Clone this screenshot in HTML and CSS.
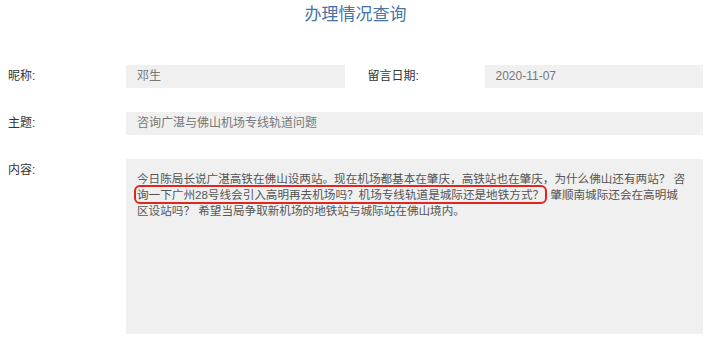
FILE: index.html
```html
<!DOCTYPE html>
<html>
<head>
    <meta charset="utf-8">
    <title>办理情况查询</title>
    <link rel="stylesheet" href="styles.css">
</head>
<body>
    <div class="query-page">
        <h2 class="page-title">办理情况查询</h2>
        <div class="detail-grid">
            <div class="field-label">昵称:</div>
            <div class="field-value">邓生</div>
            <div class="field-label field-label-inner">留言日期:</div>
            <div class="field-value">2020-11-07</div>

            <div class="field-label">主题:</div>
            <div class="field-value field-wide">咨询广湛与佛山机场专线轨道问题</div>

            <div class="field-label">内容:</div>
            <div class="field-value field-wide field-content">今日陈局长说广湛高铁在佛山设两站。现在机场都基本在肇庆，高铁站也在肇庆，为什么佛山还有两站？ 咨<span class="mark">询一下广州28号线会引入高明再去机场吗？机场专线轨道是城际还是地铁方式？</span> 肇顺南城际还会在高明城区设站吗？ 希望当局争取新机场的地铁站与城际站在佛山境内。</div>
        </div>
    </div>
</body>
</html>
```

FILE: styles.css
```css
body {
    margin: 0;
    background: #fff;
    font-family: "Liberation Sans", "Noto Sans CJK SC", sans-serif;
}
.query-page {
    padding: 0 14px 0 8px;
}
.page-title {
    margin: 0 0 35px;
    font-size: 17px;
    font-weight: normal;
    line-height: 30px;
    text-align: center;
    color: #4673a5;
}
.detail-grid {
    display: grid;
    grid-template-columns: 118px 1fr 140px 1fr;
    row-gap: 24px;
}
.field-label {
    font-size: 12px;
    line-height: 23px;
    color: #333;
}
.field-label-inner {
    padding-left: 23px;
}
.field-value {
    height: 23px;
    padding: 0 11px;
    background: #f0f0f0;
    font-size: 12px;
    line-height: 23px;
    color: #777;
}
.field-wide {
    grid-column: 2 / 5;
}
.field-content {
    height: 175px;
    box-sizing: border-box;
    padding: 12px 15px 0 11px;
    font-size: 11.6px;
    line-height: 16px;
    color: #555;
}
.mark {
    margin-right: 3px;
    outline: 2px solid #e0261f;
    outline-offset: 1px;
    border-radius: 3px;
}
```
